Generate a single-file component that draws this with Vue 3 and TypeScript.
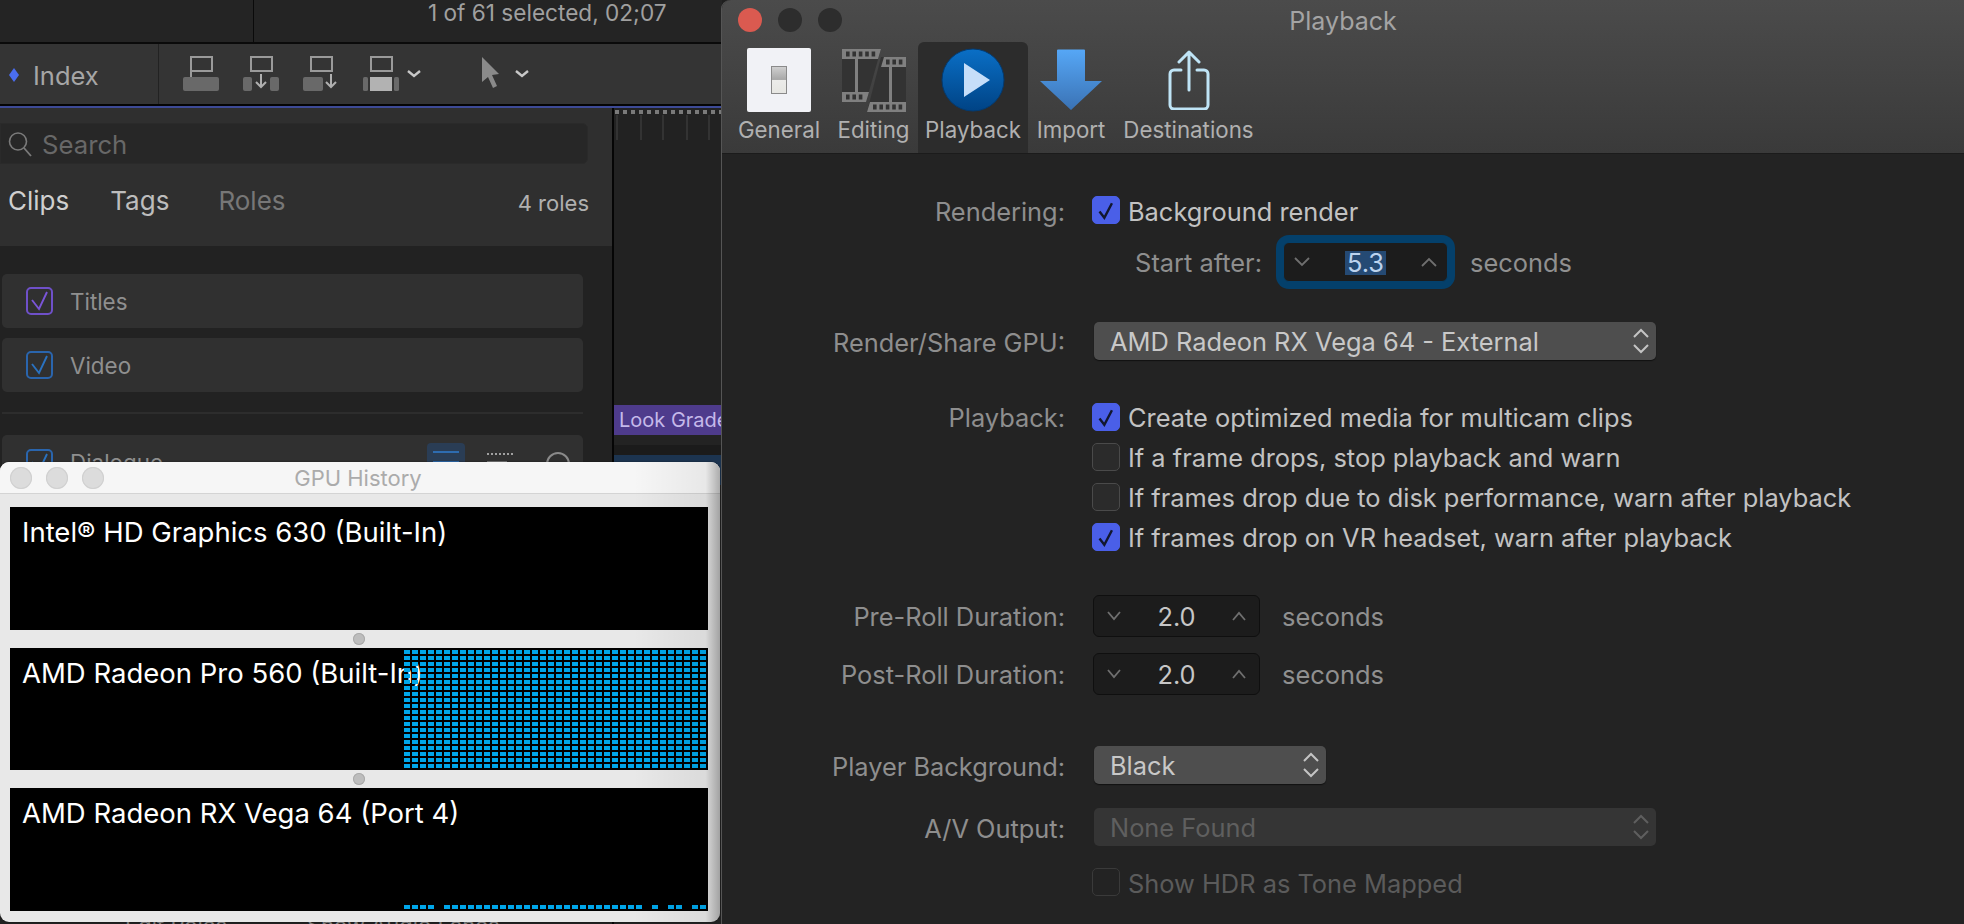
<script setup lang="ts">
const gridCols: number[] = Array.from({ length: 38 }, (_, i) => i)
const gridRows: number[] = Array.from({ length: 20 }, (_, i) => i)
const vegaCols: number[] = [0, 1, 2, 3, ...Array.from({ length: 25 }, (_, i) => i + 5), 31, 33, 34, 36, 37]
const dots: number[] = Array.from({ length: 14 }, (_, i) => i * 8 + 1)
const ticks: number[] = [2, 26, 48, 72, 94]
const holesA: number[] = [0, 1, 2, 3, 4]
const playback = [
  { text: 'Create optimized media for multicam clips', on: true, lbl: 'Playback:' },
  { text: 'If a frame drops, stop playback and warn', on: false, lbl: '' },
  { text: 'If frames drop due to disk performance, warn after playback', on: false, lbl: '' },
  { text: 'If frames drop on VR headset, warn after playback', on: true, lbl: '' }
]
const rolls = [
  { lbl: 'Pre-Roll Duration:', val: '2.0' },
  { lbl: 'Post-Roll Duration:', val: '2.0' }
]
</script>

<template>
  <div class="desktop">
    <!-- background application -->
    <div class="app">
      <div class="topbar">
        <div class="top-left"></div>
        <div class="status">1 of 61 selected, 02;07</div>
      </div>
      <div class="toolbar">
        <div class="index-cell"><span class="diamond"></span><span class="index-txt">Index</span></div>
        <svg class="tools" width="380" height="60" viewBox="170 44 380 60">
          <g fill="none" stroke="#9a9a9a" stroke-width="2">
            <path d="M192 79V57h21v14h-21" />
            <rect x="252" y="57" width="21" height="14" />
            <rect x="312" y="57" width="21" height="14" />
            <rect x="372" y="57" width="21" height="14" />
          </g>
          <g fill="#696969">
            <rect x="184" y="77" width="36" height="14" rx="2" />
            <rect x="244" y="77" width="9" height="14" rx="2" />
            <rect x="271" y="77" width="9" height="14" rx="2" />
            <rect x="304" y="77" width="20" height="14" rx="2" />
            <rect x="364" y="77" width="5" height="14" rx="1.5" />
            <rect x="395" y="77" width="5" height="14" rx="1.5" />
          </g>
          <rect x="371" y="77" width="22" height="14" fill="#b2b2b2" />
          <g fill="none" stroke="#b0b0b0" stroke-width="2">
            <path d="M262 74v13M257 82l5 5 5-5" />
            <path d="M332 74v13M327 82l5 5 5-5" />
          </g>
          <g fill="none" stroke="#c8c8c8" stroke-width="2.4">
            <path d="M409 71l6 5 6-5" />
            <path d="M517 71l6 5 6-5" />
          </g>
          <path d="M483 57l17 17-7 1 5 11-4 2-5-11-6 5z" fill="#8a8a8a" />
        </svg>
      </div>
      <div class="accent"></div>
      <div class="main">
        <div class="sidebar">
          <div class="sb-head">
            <div class="search">
              <svg width="24" height="26" viewBox="0 0 24 26" class="mag">
                <circle cx="10" cy="10.5" r="8.5" fill="none" stroke="#7a7a7a" stroke-width="1.6" />
                <path d="M16 17l7 8" stroke="#7a7a7a" stroke-width="1.8" />
              </svg>
              <span class="search-txt">Search</span>
            </div>
            <div class="tabs">
              <span class="tab t-clips">Clips</span>
              <span class="tab t-tags">Tags</span>
              <span class="tab t-roles">Roles</span>
              <span class="count">4 roles</span>
            </div>
          </div>
          <div class="sb-list">
            <div class="role">
              <span class="role-box purple"><svg width="23" height="24" viewBox="0 0 23 24"><path d="M4 11l7 9 8-17" fill="none" stroke="#7a55d8" stroke-width="1.900" /></svg></span>
              <span class="role-name">Titles</span>
            </div>
            <div class="role">
              <span class="role-box blue"><svg width="23" height="24" viewBox="0 0 23 24"><path d="M4 11l7 9 8-17" fill="none" stroke="#2a72c0" stroke-width="1.900" /></svg></span>
              <span class="role-name">Video</span>
            </div>
            <div class="role-sep"></div>
            <div class="role tall">
              <span class="role-box blue"><svg width="23" height="24" viewBox="0 0 23 24"><path d="M4 11l7 9 8-17" fill="none" stroke="#2a72c0" stroke-width="1.900" /></svg></span>
              <span class="role-name">Dialogue</span>
              <span class="lanes"><i></i><i></i></span>
              <span class="dotted"><i></i></span>
              <span class="ring"></span>
            </div>
          </div>
          <div class="sb-foot"><span class="foot-a">Edit Roles…</span><span>Show Audio Lanes</span></div>
        </div>
        <div class="timeline">
          <svg class="ruler" width="108" height="34" viewBox="0 0 108 34">
            <rect v-for="d in dots" :key="d" :x="d" y="2" width="4" height="4" fill="#7a7a7a" />
            <rect v-for="t in ticks" :key="t" :x="t" y="7" width="2" height="25" fill="#333" />
          </svg>
          <div class="look">Look Grade</div>
          <div class="tl-gap"></div>
          <div class="clip"></div>
        </div>
      </div>
    </div>

    <!-- GPU History window -->
    <div class="gpu">
      <div class="gpu-title">
        <span class="g-light"></span><span class="g-light"></span><span class="g-light"></span>
        <span class="gpu-name">GPU History</span>
      </div>
      <div class="gpu-body">
        <div class="graph">Intel® HD Graphics 630 (Built-In)</div>
        <div class="handle"><span></span></div>
        <div class="graph short">
          AMD Radeon Pro 560 (Built-In)
          <svg class="bars full" width="302" height="118" viewBox="0 0 302 118">
            <template v-for="r in gridRows" :key="r">
              <rect v-for="c in gridCols" :key="c" :x="c * 8" :y="r * 6" width="6" height="4" fill="#00a6ea" />
            </template>
          </svg>
        </div>
        <div class="handle"><span></span></div>
        <div class="graph">
          AMD Radeon RX Vega 64 (Port 4)
          <svg class="bars low" width="302" height="4" viewBox="0 0 302 4">
            <rect v-for="c in vegaCols" :key="c" :x="c * 8" y="0" width="6" height="4" fill="#00a6ea" />
          </svg>
        </div>
      </div>
    </div>

    <!-- Preferences window -->
    <div class="prefs">
      <div class="prefs-head">
        <div class="lights">
          <span class="light red"></span><span class="light"></span><span class="light"></span>
          <span class="prefs-title">Playback</span>
        </div>
        <div class="tbar">
          <div class="tb w-general">
            <div class="tb-icon">
              <div class="switch-plate"><div class="switch"></div></div>
            </div>
            <span>General</span>
          </div>
          <div class="tb w-editing">
            <div class="tb-icon">
              <svg width="66" height="64" viewBox="840 48 66 64">
                <path d="M841 49h39l-15 53h-24z" fill="#333" />
                <path d="M880 57h25v55h-39z" fill="#333" />
                <g fill="#808080">
                  <path d="M841 49h39l-3 10h-36z" />
                  <path d="M841 92h27l-3 10h-24z" />
                  <path d="M883 57h22v10h-25z" />
                  <path d="M869 102h36v10h-39z" />
                  <rect x="854" y="59" width="3" height="33" />
                  <rect x="888" y="67" width="3" height="35" />
                </g>
                <g fill="#333">
                  <rect v-for="h in holesA" :key="'a' + h" :x="845 + h * 6.4" y="51.5" width="3.6" height="5" />
                  <rect v-for="h in [0, 1, 2]" :key="'b' + h" :x="845 + h * 6.4" y="94.5" width="3.6" height="5" />
                  <rect v-for="h in [0, 1, 2]" :key="'c' + h" :x="885 + h * 6.4" y="59.5" width="3.6" height="5" />
                  <rect v-for="h in holesA" :key="'d' + h" :x="872 + h * 6.4" y="104.5" width="3.6" height="5" />
                </g>
              </svg>
            </div>
            <span>Editing</span>
          </div>
          <div class="tb w-playback active">
            <div class="tb-icon">
              <svg width="66" height="66" viewBox="0 0 66 66">
                <defs>
                  <linearGradient id="playG" x1="0" y1="0" x2="0" y2="1">
                    <stop offset="0" stop-color="#0a6fc6" />
                    <stop offset="1" stop-color="#004385" />
                  </linearGradient>
                </defs>
                <circle cx="33" cy="33" r="31" fill="url(#playG)" stroke="#033a70" stroke-width="1" />
                <path d="M24 16l26 17-26 17z" fill="#c6def9" />
              </svg>
            </div>
            <span>Playback</span>
          </div>
          <div class="tb w-import">
            <div class="tb-icon">
              <svg width="64" height="64" viewBox="0 0 64 64">
                <defs>
                  <linearGradient id="impG" x1="0" y1="0" x2="0" y2="1">
                    <stop offset="0" stop-color="#56a7f6" />
                    <stop offset="1" stop-color="#3a72b4" />
                  </linearGradient>
                </defs>
                <path d="M18 2.500a1 1 0 0 1 1-1h26a1 1 0 0 1 1 1V33h17L32 62 1 33h17z" fill="url(#impG)" />
              </svg>
            </div>
            <span>Import</span>
          </div>
          <div class="tb w-dest">
            <div class="tb-icon">
              <svg width="44" height="60" viewBox="0 0 44 60">
                <g fill="none" stroke="#bfe4f6" stroke-width="3" stroke-linecap="round" stroke-linejoin="round">
                  <path d="M14 20H7a4 4 0 0 0-4 4v31a4 4 0 0 0 4 4h30a4 4 0 0 0 4-4V24a4 4 0 0 0-4-4h-7" />
                  <path d="M22 40V3M12 12l10-10 10 10" />
                </g>
              </svg>
            </div>
            <span>Destinations</span>
          </div>
        </div>
      </div>

      <div class="form">
        <div class="row h28">
          <span class="lbl">Rendering:</span>
          <span class="cb on"><svg width="28" height="28" viewBox="0 0 28 28"><path d="M7 15.700l5.200 6.600 8.200-15.600" fill="none" stroke="#12172e" stroke-width="2.600" /></svg></span>
          <span class="val">Background render</span>
        </div>
        <div class="row start">
          <span class="lbl-inline">Start after:</span>
          <div class="stepper focus">
            <svg class="chev" width="18" height="10" viewBox="0 0 18 10"><path d="M2 1l7 7 7-7" /></svg>
            <span class="num"><span class="sel">5.3</span></span>
            <svg class="chev" width="18" height="10" viewBox="0 0 18 10"><path d="M2 9l7-7 7 7" /></svg>
          </div>
          <span class="secs">seconds</span>
        </div>
        <div class="row select-row">
          <span class="lbl">Render/Share GPU:</span>
          <div class="select wide">
            <span class="sel-txt">AMD Radeon RX Vega 64 - External</span>
            <svg class="updown" width="18" height="28" viewBox="0 0 18 28"><path d="M2 10l7-7 7 7M2 18l7 7 7-7" /></svg>
          </div>
        </div>
        <div class="group-play">
          <div v-for="p in playback" :key="p.text" class="row h28">
            <span class="lbl">{{ p.lbl }}</span>
            <span class="cb" :class="{ on: p.on }"><svg v-if="p.on" width="28" height="28" viewBox="0 0 28 28"><path d="M7 15.700l5.200 6.600 8.200-15.600" fill="none" stroke="#12172e" stroke-width="2.600" /></svg></span>
            <span class="val">{{ p.text }}</span>
          </div>
        </div>
        <div class="group-roll">
          <div v-for="r in rolls" :key="r.lbl" class="row h42">
            <span class="lbl">{{ r.lbl }}</span>
            <div class="stepper small">
              <svg class="chev" width="16" height="10" viewBox="0 0 16 10"><path d="M2 1l6 7 6-7" /></svg>
              <span class="num">{{ r.val }}</span>
              <svg class="chev" width="16" height="10" viewBox="0 0 16 10"><path d="M2 9l6-7 6 7" /></svg>
            </div>
            <span class="secs">seconds</span>
          </div>
        </div>
        <div class="row player">
          <span class="lbl">Player Background:</span>
          <div class="select narrow">
            <span class="sel-txt">Black</span>
            <svg class="updown" width="18" height="28" viewBox="0 0 18 28"><path d="M2 10l7-7 7 7M2 18l7 7 7-7" /></svg>
          </div>
        </div>
        <div class="row av">
          <span class="lbl">A/V Output:</span>
          <div class="select wide off">
            <span class="sel-txt">None Found</span>
            <svg class="updown" width="18" height="28" viewBox="0 0 18 28"><path d="M2 10l7-7 7 7M2 18l7 7 7-7" /></svg>
          </div>
        </div>
        <div class="row hdr">
          <span class="lbl"></span>
          <span class="cb off"></span>
          <span class="val dim">Show HDR as Tone Mapped</span>
        </div>
      </div>
    </div>
  </div>
</template>

<style>
html, body { margin: 0; background: #222; }
</style>

<style scoped>
.desktop {
  position: relative;
  width: 1964px;
  height: 924px;
  overflow: hidden;
  background: #1f1f1f;
  font-family: Inter, "Liberation Sans", sans-serif;
}
.app {
  width: 722px;
  height: 924px;
  display: flex;
  flex-direction: column;
  background: #222;
  overflow: hidden;
}
.topbar {
  height: 44px;
  box-sizing: border-box;
  display: flex;
  border-bottom: 2px solid #0a0a0a;
  background: #242424;
  flex: none;
}
.top-left { width: 253px; border-right: 1px solid #0a0a0a; }
.status {
  margin-left: 174px;
  line-height: 25px;
  font-size: 22.6px;
  color: #a0a0a0;
  white-space: nowrap;
}
.toolbar {
  height: 60px;
  flex: none;
  display: flex;
  background: #343434;
}
.index-cell {
  width: 159px;
  display: flex;
  align-items: center;
  border-right: 1px solid #222;
  padding-left: 9px;
  box-sizing: border-box;
  padding-top: 2px;
}
.diamond {
  width: 10px;
  height: 14px;
  background: #4a6df0;
  clip-path: polygon(50% 0, 100% 50%, 50% 100%, 0 50%);
}
.index-txt { margin-left: 14px; font-size: 25.5px; color: #a6a6a6; }
.tools { margin-left: 10px; }
.accent {
  height: 4px;
  flex: none;
  background: linear-gradient(#050505 50%, #3d4a96 50%);
}
.main { flex: 1; display: flex; min-height: 0; }
.sidebar { width: 612px; display: flex; flex-direction: column; flex: none; }
.sb-head {
  height: 138px;
  flex: none;
  background: #2f2f2f;
  padding-top: 15px;
  box-sizing: border-box;
}
.search {
  width: 588px;
  height: 41px;
  box-sizing: border-box;
  background: #272727;
  border: 1px solid #2a2a2a;
  border-radius: 0 6px 6px 0;
  display: flex;
  align-items: center;
  color: #666;
  padding-top: 1px;
}
.mag { margin-left: 7px; flex: none; }
.search-txt { margin-left: 10px; font-size: 25.700px; color: #686868; }
.tabs {
  display: flex;
  align-items: center;
  margin-top: 19px;
  width: 589px;
  height: 34px;
  padding-left: 8px;
  box-sizing: border-box;
}
.tab { font-size: 26px; }
.t-clips { color: #cfcfcf; }
.t-tags { color: #bdbdbd; margin-left: 41px; }
.t-roles { color: #777; margin-left: 49px; }
.count { margin-left: auto; font-size: 22px; color: #b0b0b0; padding-top: 5px; }
.sb-list {
  height: 666px;
  flex: none;
  padding: 28px 29px 0 2px;
  box-sizing: border-box;
  display: flex;
  flex-direction: column;
  gap: 10px;
}
.role {
  height: 54px;
  flex: none;
  background: #303030;
  border-radius: 5px;
  display: flex;
  align-items: center;
  padding-left: 24px;
  box-sizing: border-box;
  position: relative;
}
.tall { height: 200px; align-items: flex-start; padding-top: 14px; margin-top: 11px; }
.role-box {
  width: 27px;
  height: 28px;
  box-sizing: border-box;
  border: 2px solid;
  border-radius: 5px;
  display: flex;
  align-items: center;
  justify-content: center;
  flex: none;
}
.purple { border-color: #6f50c9; }
.blue { border-color: #2a65ad; }
.role-name { margin-left: 17px; font-size: 22.4px; color: #8f8f8f; }
.role-sep { height: 2px; flex: none; background: #2d2d2d; margin-top: 10px; }
.lanes {
  position: absolute;
  left: 425px;
  top: 8px;
  width: 38px;
  height: 40px;
  background: #2a3d55;
  border-radius: 4px;
}
.lanes i {
  display: block;
  height: 2px;
  margin: 8px 6px 0;
  background: #2e6cb0;
}
.dotted {
  position: absolute;
  left: 485px;
  top: 18px;
  width: 26px;
  border-top: 2px dotted #a0a0a0;
}
.dotted i { display: block; width: 20px; height: 8px; background: #777; margin-top: 6px; }
.ring {
  position: absolute;
  left: 544px;
  top: 17px;
  width: 20px;
  height: 20px;
  border: 2px solid #8a8a8a;
  border-radius: 50%;
}
.sb-foot {
  display: flex;
  padding-left: 125px;
  font-size: 22px;
  color: #888;
  white-space: nowrap;
}
.foot-a { width: 182px; flex: none; }
.timeline {
  width: 110px;
  flex: none;
  box-sizing: border-box;
  border-left: 2px solid #050505;
  background: #222;
  display: flex;
  flex-direction: column;
}
.ruler { flex: none; }
.look {
  margin-top: 263px;
  height: 30px;
  line-height: 30px;
  background: #4e3b8c;
  color: #c5b9ea;
  font-size: 20px;
  padding-left: 5px;
  white-space: nowrap;
  overflow: hidden;
  flex: none;
}
.tl-gap { height: 20px; flex: none; background: linear-gradient(#232323 50%, #1b1b1b 50%); }
.clip { height: 30px; flex: none; background: #1c3450; }

.gpu {
  position: absolute;
  left: 0;
  top: 462px;
  width: 720px;
  height: 460px;
  border-radius: 9px;
  background: #e8e8e8;
  overflow: hidden;
  box-shadow: 0 0 2px rgba(0, 0, 0, 0.5);
}
.gpu::after {
  content: "";
  position: absolute;
  inset: 0;
  pointer-events: none;
  background: linear-gradient(90deg, rgba(0, 0, 0, 0) 88%, rgba(0, 0, 0, 0.06) 98%, rgba(0, 0, 0, 0.3) 100%);
}
.gpu-title {
  height: 31px;
  box-sizing: content-box;
  background: #f6f6f6;
  border-bottom: 1px solid #d4d4d4;
  display: flex;
  align-items: center;
  padding-left: 10px;
  gap: 14px;
  position: relative;
}
.g-light {
  width: 22px;
  height: 22px;
  border-radius: 50%;
  background: #dcdcdc;
  box-shadow: inset 0 0 0 1px #d0d0d0;
}
.gpu-name {
  position: absolute;
  left: 0;
  right: 4px;
  text-align: center;
  font-size: 22px;
  color: #ababab;
}
.gpu-body { padding: 13px 12px 0 10px; }
.graph {
  position: relative;
  height: 123px;
  background: #000;
  color: #fff;
  font-size: 27.500px;
  line-height: 32px;
  padding: 9px 0 0 12px;
  box-sizing: border-box;
}
.short { height: 122px; }
.handle { height: 18px; display: flex; align-items: center; justify-content: center; }
.handle span {
  width: 12px;
  height: 12px;
  border-radius: 50%;
  background: #bdbdbd;
  box-shadow: inset 0 0 0 1px #aaa;
}
.bars { position: absolute; right: 2px; }
.full { top: 2px; }
.low { bottom: 2px; }

.prefs {
  position: absolute;
  left: 722px;
  top: 0;
  width: 1242px;
  height: 924px;
  background: #232323;
  border-radius: 9px 0 0 0;
  overflow: hidden;
  box-shadow: -1px 0 0 #555;
}
.prefs-head {
  height: 154px;
  box-sizing: border-box;
  background: linear-gradient(#4b4b4b, #3a3a3a);
  border-bottom: 1px solid #1b1b1b;
}
.lights {
  height: 42px;
  display: flex;
  align-items: flex-start;
  gap: 16px;
  padding: 8px 0 0 16px;
  box-sizing: border-box;
  position: relative;
}
.light { width: 24px; height: 24px; border-radius: 50%; background: #2d2d2d; }
.red { background: #da5a50; }
.prefs-title {
  position: absolute;
  left: 0;
  right: 0;
  top: 6px;
  text-align: center;
  font-size: 25px;
  color: #a4a4a4;
}
.tbar { display: flex; padding-left: 7px; height: 111px; }
.tb {
  display: flex;
  flex-direction: column;
  align-items: center;
  flex: none;
  font-size: 22.300px;
  color: #b0b0b0;
  white-space: nowrap;
  border-radius: 6px 6px 0 0;
}
.tb-icon { height: 75px; display: flex; align-items: center; justify-content: center; }
.tb > span { line-height: 26px; }
.w-general { width: 100px; }
.w-editing { width: 89px; }
.w-playback { width: 110px; }
.w-import { width: 86px; }
.w-dest { width: 149px; }
.active { background: #2c2c2c; }
.switch-plate {
  width: 64px;
  height: 64px;
  background: #f1f2f6;
  border-radius: 2px;
  display: flex;
  align-items: center;
  justify-content: center;
}
.switch {
  width: 16px;
  height: 28px;
  box-sizing: border-box;
  border: 1px solid #8a8a8a;
  background: linear-gradient(#cfcfcf, #a8a8a8 48%, #ececea 50%, #e6e6e2);
}
.form { display: flex; flex-direction: column; padding-top: 42px; }
.row { display: flex; align-items: center; flex: none; font-size: 25.400px; color: #8e8e8e; white-space: nowrap; }
.h28 { height: 28px; }
.h42 { height: 42px; }
.lbl { width: 343px; text-align: right; margin-right: 27px; flex: none; padding-top: 2px; }
.cb {
  width: 28px;
  height: 28px;
  box-sizing: border-box;
  border-radius: 5px;
  background: #2b2b2b;
  border: 1px solid #4a4a4a;
  display: flex;
  align-items: center;
  justify-content: center;
  flex: none;
}
.cb.on { background: #4a5fe8; border-color: #4a5fe8; }
.cb.off { background: transparent; border-color: #3a3a3a; }
.val { margin-left: 8px; color: #c2c2c2; padding-top: 2px; }
.val.dim { color: #5b5b5b; }
.start { margin-top: 18px; height: 40px; padding-left: 411px; }
.lbl-inline { width: 129px; flex: none; text-align: right; margin-right: 21px; }
.stepper {
  background: #1c1c1c;
  border: 1px solid #0f0f0f;
  border-radius: 6px;
  display: flex;
  align-items: center;
  justify-content: space-between;
  box-sizing: border-box;
  flex: none;
}
.focus { width: 165px; height: 40px; box-shadow: 0 0 0 7px #04406b; padding: 0 9px; border-color: #04406b; }
.small { width: 167px; height: 42px; margin-left: 1px; padding: 0 12px; }
.chev { fill: none; stroke: #6f6f6f; stroke-width: 1.8; flex: none; }
.num { color: #c6c6c6; font-size: 25.400px; }
.sel { background: #254a74; color: #bcd3ee; padding: 0 2px; display: inline-block; line-height: 24px; }
.secs { margin-left: 22px; color: #909090; }
.select-row { margin-top: 40px; height: 38px; }
.select {
  height: 38px;
  box-sizing: border-box;
  background: #4e4e4e;
  border-radius: 5px;
  box-shadow: 0 1px 1px #111;
  color: #c8c8c8;
  display: flex;
  align-items: center;
  justify-content: space-between;
  padding: 0 6px 0 16px;
  margin-left: 2px;
  flex: none;
}
.sel-txt { padding-top: 1px; }
.wide { width: 562px; }
.narrow { width: 232px; }
.off { background: #353535; color: #5f5f5f; box-shadow: none; }
.updown { fill: none; stroke: #c4c4c4; stroke-width: 2; flex: none; }
.off .updown { stroke: #5f5f5f; }
.group-play { display: flex; flex-direction: column; gap: 12px; margin-top: 43px; }
.group-play .lbl, .group-play .val { padding-top: 0; }
.group-roll { display: flex; flex-direction: column; gap: 16px; margin-top: 44px; }
.group-roll .lbl { padding-top: 0; }
.player { margin-top: 51px; height: 38px; }
.av { margin-top: 24px; height: 38px; }
.hdr { margin-top: 22px; height: 28px; }
</style>
